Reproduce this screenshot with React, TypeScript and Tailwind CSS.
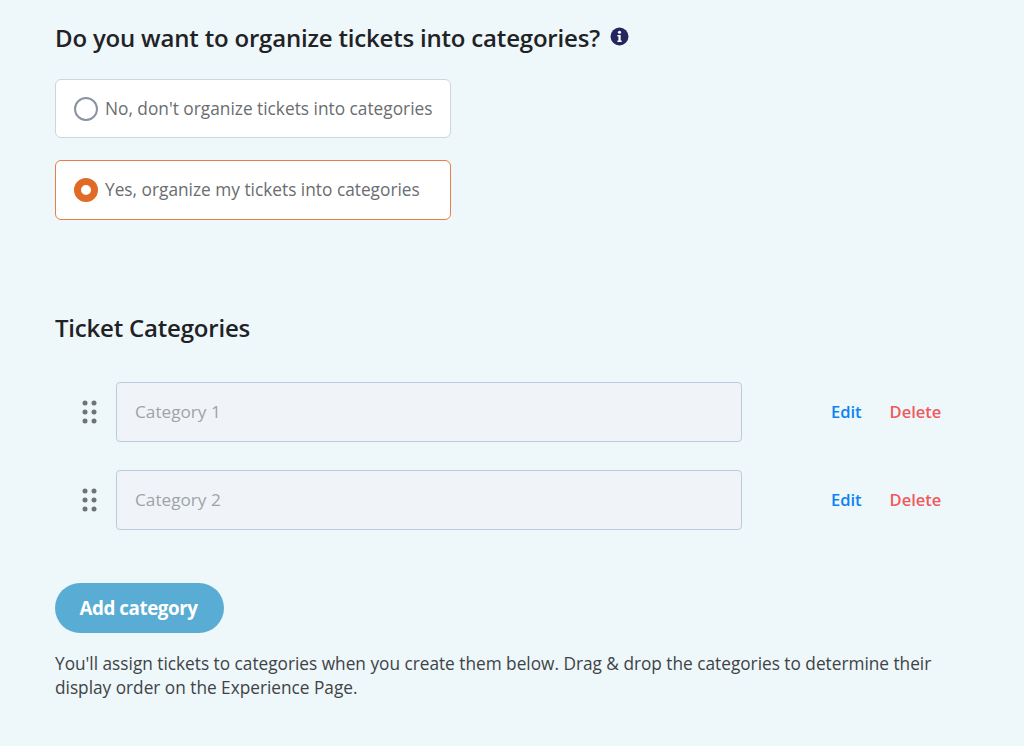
import React from 'react';

const categories = ['Category 1', 'Category 2'];

function InfoIcon() {
  return (
    <svg width="19" height="19" viewBox="0 0 18 18" className="ml-[10px] mt-[-3px]">
      <circle cx="9" cy="9" r="8.5" fill="#24265e" />
      <circle cx="9" cy="5" r="1.5" fill="#fff" />
      <path d="M7 7.6h3.1v5.2h1v1.4H7v-1.4h1v-3.8H7z" fill="#fff" />
    </svg>
  );
}

function DragHandle() {
  return (
    <svg width="16" height="24" viewBox="0 0 16 24" className="shrink-0">
      {[3, 12, 21].map((y) =>
        [3, 12].map((x) => <circle key={`${x}-${y}`} cx={x} cy={y} r="2.5" fill="#6f7478" />)
      )}
    </svg>
  );
}

function CategoryRow({ name }: { name: string }) {
  return (
    <div className="flex items-center h-[60px]">
      <div className="w-[61px] pl-[27px] flex items-center">
        <DragHandle />
      </div>
      <div className="w-[626px] h-[60px] flex items-center pl-[18px] bg-[#f0f4f9] border border-[#bccbdb] rounded-[4px] text-[17.2px] text-[#a0a3a6]">
        {name}
      </div>
      <span className="ml-[89px] text-[16.5px] font-semibold text-[#0a84f5]">Edit</span>
      <span className="ml-[28px] text-[16.5px] font-semibold text-[#f0595e]">Delete</span>
    </div>
  );
}

export default function App() {
  return (
    <div
      className="w-[1024px] h-[746px] overflow-hidden bg-[#eef7f9] pl-[55px] pt-[21px]"
      style={{ fontFamily: '"Open Sans", sans-serif' }}
    >
      <div className="flex items-center h-[34px]">
        <h2 className="text-[24px] font-semibold text-[#1f2326] tracking-[-0.19px]">
          Do you want to organize tickets into categories?
        </h2>
        <InfoIcon />
      </div>

      <div className="mt-[24px] w-[396px] h-[59px] flex items-center pl-[18px] bg-white border border-[#ccd5e2] rounded-[6px]">
        <span className="w-[24px] h-[24px] rounded-full border-[2px] border-[#8a92a3] bg-white shrink-0" />
        <span className="ml-[7px] text-[17.3px] text-[#6a6d70] whitespace-nowrap">No, don't organize tickets into categories</span>
      </div>

      <div className="mt-[22px] w-[396px] h-[60px] flex items-center pl-[18px] bg-white border border-[#e57f45] rounded-[6px]">
        <span className="w-[24px] h-[24px] rounded-full border-[7px] border-[#e06a26] bg-white shrink-0" />
        <span className="ml-[7px] text-[17.3px] text-[#6a6d70] whitespace-nowrap">Yes, organize my tickets into categories</span>
      </div>

      <h2 className="mt-[91px] text-[24px] leading-[34px] font-semibold text-[#1f2326] tracking-[-0.2px]">Ticket Categories</h2>

      <div className="mt-[37px] flex flex-col gap-[28px]">
        {categories.map((c) => (
          <CategoryRow key={c} name={c} />
        ))}
      </div>

      <button className="mt-[53px] block w-[169px] h-[50px] pr-[2px] rounded-full bg-[#59acd3] text-white text-[18.8px] font-bold tracking-[-0.45px]">
        Add category
      </button>

      <p className="mt-[19px] w-[900px] text-[17.24px] leading-[23.5px] text-[#3f4347]">
        You'll assign tickets to categories when you create them below. Drag &amp; drop the categories to determine their display order on the Experience Page.
      </p>
    </div>
  );
}
